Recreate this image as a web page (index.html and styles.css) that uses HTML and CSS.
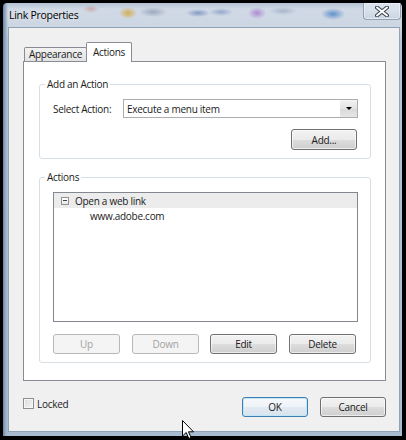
FILE: index.html
```html
<!DOCTYPE html>
<html>
<head>
<meta charset="utf-8">
<link rel="stylesheet" href="styles.css">
</head>
<body>
<div class="window">
  <div class="titlebar">
    <span class="title">Link Properties</span>
    <div class="close">
      <svg width="14" height="11" viewBox="0 0 14 11"><path d="M2 1.5 L12 9.5 M12 1.5 L2 9.5" stroke="#3a4350" stroke-width="4" stroke-linecap="round"/><path d="M2 1.5 L12 9.5 M12 1.5 L2 9.5" stroke="#ffffff" stroke-width="2" stroke-linecap="round"/></svg>
    </div>
  </div>
  <div class="client">
    <div class="tabs">
      <div class="tab tab-app">Appearance</div>
      <div class="tab tab-act">Actions</div>
    </div>
    <div class="panel">
      <fieldset class="group group-add">
        <legend>Add an Action</legend>
        <div class="row">
          <span class="row-label">Select Action:</span>
          <div class="select">
            <span class="select-text">Execute a menu item</span>
            <span class="select-btn"><span class="arrow"></span></span>
          </div>
        </div>
        <div class="add-row"><button class="btn btn-add">Add...</button></div>
      </fieldset>
      <fieldset class="group group-actions">
        <legend>Actions</legend>
        <div class="list">
          <div class="item item-sel"><span class="minus"></span>Open a web link</div>
          <div class="item item-sub">www.adobe.com</div>
        </div>
        <div class="btn-row">
          <button class="btn" disabled>Up</button>
          <button class="btn btn-down" disabled>Down</button>
          <button class="btn btn-edit">Edit</button>
          <button class="btn btn-delete">Delete</button>
        </div>
      </fieldset>
    </div>
    <div class="footer">
      <div class="check"><span class="box"></span><span>Locked</span></div>
      <div class="spacer"></div>
      <button class="btn btn-ok">OK</button>
      <button class="btn btn-cancel">Cancel</button>
    </div>
  </div>
</div>
<svg class="cursor" width="13" height="20" viewBox="0 0 13 20"><path d="M0.5 0.5 L0.5 16 L4.2 12.5 L6.8 18.5 L9 17.5 L6.5 11.8 L11.5 11.8 Z" fill="#fff" stroke="#000" stroke-width="1" stroke-linejoin="miter"/></svg>
</body>
</html>
```

FILE: styles.css
```css
html, body {
  margin: 0;
  background: #000;
}
body {
  position: relative;
  width: 406px;
  height: 440px;
  overflow: hidden;
  box-sizing: border-box;
  padding: 3px 0 0 3px;
  font-family: "Open Sans", "Noto Sans", sans-serif;
  font-size: 10px;
  letter-spacing: -0.28px;
  color: #1a1a1a;
}
.window {
  width: 399px;
  height: 433px;
  display: flex;
  flex-direction: column;
  border-radius: 4px 4px 0 0;
  background:
    radial-gradient(ellipse 9px 6px at 125px 10px, rgba(214,165,60,.85), rgba(214,165,60,0)),
    radial-gradient(ellipse 14px 5px at 150px 9px, rgba(110,130,160,.55), rgba(110,130,160,0)),
    radial-gradient(ellipse 12px 4px at 195px 10px, rgba(70,100,170,.55), rgba(70,100,170,0)),
    radial-gradient(ellipse 12px 4px at 218px 9px, rgba(90,120,180,.5), rgba(90,120,180,0)),
    radial-gradient(ellipse 9px 6px at 254px 10px, rgba(160,105,205,.7), rgba(160,105,205,0)),
    radial-gradient(ellipse 12px 6px at 330px 11px, rgba(50,115,190,.7), rgba(50,115,190,0)),
    radial-gradient(ellipse 8px 4px at 88px 6px, rgba(200,120,110,.45), rgba(200,120,110,0)),
    radial-gradient(ellipse 14px 4px at 280px 8px, rgba(120,140,170,.45), rgba(120,140,170,0)),
    linear-gradient(90deg, #6f86a3 0px, #9fb3ca 3px, rgba(159,179,202,0) 5px),
    linear-gradient(180deg, #b3c2d3 0px, #d0d9e5 6px, #ccd6e2 24px, #b4c5d8 40px, #a8bbd1 100%);
}
.titlebar {
  height: 24px;
  display: flex;
  align-items: center;
  padding-left: 6px;
}
.title {
  font-size: 10.5px;
  color: #000;
  text-shadow: 0 0 6px rgba(255,255,255,.9);
}
.close {
  margin-left: auto;
  margin-right: 1px;
  align-self: flex-start;
  width: 38px;
  height: 17px;
  box-sizing: border-box;
  border: 1px solid rgba(90,105,125,.55);
  border-top: none;
  border-radius: 0 0 4px 4px;
  background: linear-gradient(180deg, rgba(235,240,246,.7), rgba(200,212,226,.7));
  box-shadow: inset 0 0 0 1px rgba(255,255,255,.45);
  display: flex;
  align-items: center;
  justify-content: center;
}
.client {
  flex: 1;
  margin: 0 2px 4px 5px;
  background: #f0f0f0;
  border: 1px solid #8fa2b6;
  padding: 14px 13px 0 14px;
  display: flex;
  flex-direction: column;
}
.tabs {
  display: flex;
  align-items: flex-end;
  height: 19px;
  padding-left: 1px;
  position: relative;
  z-index: 1;
}
.tab {
  box-sizing: border-box;
  border: 1px solid #898c95;
  border-bottom: none;
  text-align: center;
  border-radius: 2px 2px 0 0;
}
.tab-app {
  width: 63px;
  height: 14px;
  line-height: 13px;
  background: linear-gradient(180deg, #f2f2f2, #e3e3e3);
}
.tab-act {
  width: 46px;
  height: 20px;
  line-height: 18px;
  margin-left: -1px;
  margin-bottom: -1px;
  background: #fff;
}
.panel {
  height: 320px;
  box-sizing: border-box;
  border: 1px solid #898c95;
  background: #fff;
  padding: 16px 14px 0 15px;
}
.group {
  margin: 0;
  padding: 8px 12px 8px 13px;
  border: 1px solid #d5dfe5;
  border-radius: 3px;
  min-width: 0;
}
.group legend {
  padding: 0 2px;
  margin-left: -8px;
  line-height: 13px;
}
.group-actions {
  margin-top: 12px;
}
.row {
  display: flex;
  align-items: center;
  height: 19px;
}
.row-label {
  width: 70px;
}
.select {
  flex: 1;
  height: 19px;
  box-sizing: border-box;
  border: 1px solid #abadb3;
  background: #fff;
  display: flex;
  align-items: center;
  padding-left: 3px;
}
.select-text {
  flex: 1;
}
.select-btn {
  width: 17px;
  height: 17px;
  background: linear-gradient(180deg, #f3f3f3, #e2e2e2 50%, #d8d8d8 51%, #e6e6e6);
  display: flex;
  align-items: center;
  justify-content: center;
}
.arrow {
  width: 0;
  height: 0;
  border-left: 3px solid transparent;
  border-right: 3px solid transparent;
  border-top: 3px solid #000;
}
.add-row {
  display: flex;
  justify-content: flex-end;
  margin-top: 11px;
  padding-right: 1px;
}
.btn {
  width: 67px;
  height: 20px;
  padding: 0;
  margin: 0;
  box-sizing: border-box;
  border: 1px solid #707070;
  border-radius: 3px;
  background: linear-gradient(180deg, #f2f2f2 0%, #ebebeb 50%, #dddddd 51%, #cfcfcf 100%);
  box-shadow: inset 0 0 0 1px rgba(255,255,255,.6);
  font: inherit;
  letter-spacing: inherit;
  color: #1a1a1a;
}
.btn-add {
  width: 66px;
  height: 21px;
}
.btn:disabled {
  border-color: #b5b8ba;
  background: #f4f4f4;
  box-shadow: none;
  color: #a3a3a3;
}
.list {
  height: 130px;
  box-sizing: border-box;
  border: 1px solid #828790;
  background: #fff;
}
.item {
  height: 15px;
  display: flex;
  align-items: center;
  padding-left: 7px;
}
.item-sel {
  background: #ececec;
}
.item-sub {
  height: 16px;
  padding-left: 36px;
}
.minus {
  width: 8px;
  height: 8px;
  box-sizing: border-box;
  border: 1px solid #919191;
  margin-right: 6px;
  background: linear-gradient(180deg, #fff, #e8e8e8);
  display: flex;
  align-items: center;
  justify-content: center;
}
.minus::before {
  content: "";
  width: 4px;
  height: 1px;
  background: #444;
}
.btn-row {
  display: flex;
  margin-top: 12px;
}
.btn-down {
  margin-left: 12px;
}
.btn-edit {
  margin-left: 11px;
}
.btn-delete {
  margin-left: 12px;
}
.footer {
  display: flex;
  align-items: flex-start;
  margin-top: 16px;
}
.check {
  display: flex;
  align-items: center;
  gap: 3px;
  margin-top: 1px;
  height: 11px;
}
.box {
  width: 11px;
  height: 11px;
  box-sizing: border-box;
  border: 1px solid #8e8f8f;
  background: linear-gradient(135deg, #dcdcdc, #f4f4f4);
  box-shadow: inset 0 0 0 1px #f6f6f6;
}
.spacer {
  flex: 1;
}
.btn-ok {
  width: 66px;
  border-color: #3c7fb1;
  background: linear-gradient(180deg, #f6f9fc 0%, #eef3f8 50%, #e2eaf2 51%, #d8e3ed 100%);
  box-shadow: inset 0 0 0 1px #c4e5f6;
}
.btn-cancel {
  width: 66px;
  margin-left: 12px;
}
.cursor {
  position: absolute;
  left: 182px;
  top: 420px;
}
```
